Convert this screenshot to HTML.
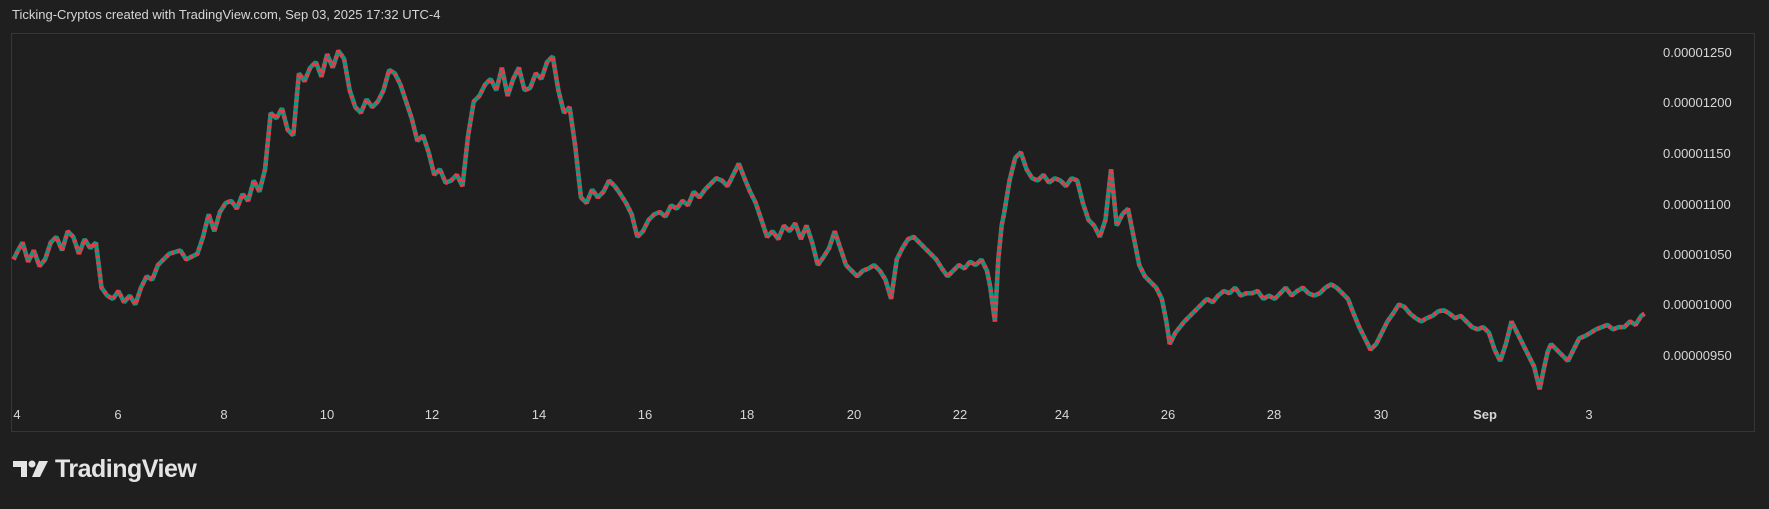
<!DOCTYPE html>
<html><head><meta charset="utf-8"><style>
html,body{margin:0;padding:0;background:#1f1f1f;width:1769px;height:509px;overflow:hidden;font-family:"Liberation Sans",sans-serif}
.hdr{position:absolute;left:12px;top:7px;color:#d6d6d6;font-size:13px}
.frame{position:absolute;left:11px;top:33px;width:1744px;height:399px;border:1px solid #363636;box-sizing:border-box}
.pl{position:absolute;left:1663px;color:#d6d6d6;font-size:13px}
.dl{position:absolute;top:407px;color:#d6d6d6;font-size:13px;transform:translateX(-50%)}
.logo{position:absolute;left:13px;top:455px;color:#e4e4e4;font-size:25px;font-weight:bold;letter-spacing:-0.5px}
</style></head><body>
<div class="hdr">Ticking-Cryptos created with TradingView.com, Sep 03, 2025 17:32 UTC-4</div>
<div class="frame"></div>
<svg width="1769" height="509" style="position:absolute;left:0;top:0">
<defs>
<polyline id="p" points="12,230 16,222 20,215 25,232 30,222 35,236 40,230 45,215 50,210 55,222 60,205 65,210 70,225 75,212 80,220 85,215 90,255 95,262 100,265 105,258 110,268 115,262 120,270 125,255 130,245 135,248 140,235 145,230 150,225 160,222 165,230 175,225 180,210 185,190 190,205 195,188 200,180 205,178 210,185 215,172 220,178 225,160 230,170 235,150 240,100 245,105 250,96 255,115 260,120 265,65 270,72 275,60 280,55 285,68 290,48 295,60 300,45 305,52 310,80 315,95 320,100 325,88 330,95 335,90 340,80 345,62 350,65 355,75 360,90 365,105 370,125 375,120 380,135 385,155 390,150 395,162 400,160 405,155 410,165 415,120 420,90 425,85 430,75 435,70 440,80 445,60 450,85 455,70 460,60 465,80 470,78 475,65 480,70 485,55 490,50 495,80 500,100 505,95 510,130 515,175 520,180 525,168 530,175 535,170 540,160 545,165 550,172 555,180 560,190 565,210 570,205 575,195 580,190 585,188 590,192 595,182 600,185 605,178 610,182 615,170 620,175 625,168 630,163 635,158 640,160 645,165 650,155 655,145 660,158 665,170 670,180 675,195 680,210 685,205 690,212 695,200 700,205 705,198 710,212 715,200 720,215 725,235 730,228 735,220 740,205 745,220 750,235 755,240 760,245 765,240 770,238 775,235 780,240 785,248 790,265 795,230 800,220 805,212 810,210 815,215 820,220 825,225 830,230 835,238 840,245 845,240 850,235 855,238 860,232 865,235 870,230 875,240 878,255 882,285 885,230 888,200 890,190 895,160 900,140 905,135 910,150 915,158 920,160 925,155 930,162 935,158 940,160 945,165 950,158 955,160 960,180 965,195 970,200 975,210 980,195 985,150 988,180 990,200 995,190 1000,185 1005,210 1010,235 1015,245 1020,250 1025,255 1030,265 1034,285 1037,305 1042,295 1046,290 1050,285 1055,280 1060,275 1065,270 1070,265 1075,268 1080,262 1085,258 1090,260 1095,255 1100,262 1105,260 1110,260 1115,258 1120,265 1125,262 1130,265 1135,260 1140,255 1145,262 1150,258 1155,255 1160,260 1165,262 1170,260 1175,255 1180,252 1185,255 1190,260 1195,265 1200,278 1205,290 1210,300 1215,310 1220,305 1225,295 1230,285 1235,278 1240,270 1245,272 1250,278 1255,282 1260,285 1265,282 1270,280 1275,276 1280,275 1285,278 1290,282 1295,280 1300,285 1305,290 1310,292 1315,290 1320,295 1325,310 1330,320 1335,305 1340,285 1345,295 1350,305 1355,315 1360,325 1365,345 1368,330 1372,312 1375,305 1380,310 1385,315 1390,320 1395,310 1400,300 1405,298 1410,295 1415,292 1420,290 1425,288 1430,292 1435,290 1440,290 1445,285 1450,288 1455,280 1458,278"/>
</defs>
<g transform="scale(1.128)" fill="none" stroke-linejoin="bevel">
<use href="#p" stroke="#089981" stroke-width="4"/>
<use href="#p" stroke="#f23645" stroke-width="4" stroke-dasharray="2.5 3"/>
</g>
</svg>
<div class="pl" style="top:45px">0.00001250</div>
<div class="pl" style="top:95px">0.00001200</div>
<div class="pl" style="top:146px">0.00001150</div>
<div class="pl" style="top:197px">0.00001100</div>
<div class="pl" style="top:247px">0.00001050</div>
<div class="pl" style="top:297px">0.00001000</div>
<div class="pl" style="top:348px">0.00000950</div>
<div class="dl" style="left:17px">4</div>
<div class="dl" style="left:118px">6</div>
<div class="dl" style="left:224px">8</div>
<div class="dl" style="left:327px">10</div>
<div class="dl" style="left:432px">12</div>
<div class="dl" style="left:539px">14</div>
<div class="dl" style="left:645px">16</div>
<div class="dl" style="left:747px">18</div>
<div class="dl" style="left:854px">20</div>
<div class="dl" style="left:960px">22</div>
<div class="dl" style="left:1062px">24</div>
<div class="dl" style="left:1168px">26</div>
<div class="dl" style="left:1274px">28</div>
<div class="dl" style="left:1381px">30</div>
<div class="dl" style="left:1485px;font-weight:bold">Sep</div>
<div class="dl" style="left:1589px">3</div>
<div class="logo"><svg width="36" height="22" viewBox="0 0 36 22" style="vertical-align:-3px;margin-right:6px"><path d="M0 3h14v16h-6v-10h-8z" fill="#e4e4e4"/><circle cx="19" cy="6" r="3.5" fill="#e4e4e4"/><path d="M26 3h9l-8 16h-8z" fill="#e4e4e4"/></svg>TradingView</div>
</body></html>
